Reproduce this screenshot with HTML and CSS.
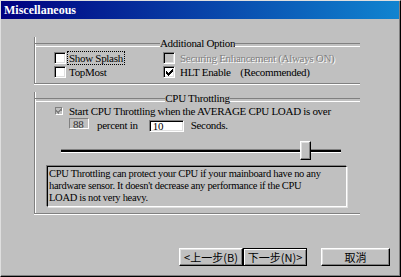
FILE: index.html
```html
<!DOCTYPE html>
<html>
<head>
<meta charset="utf-8">
<link rel="stylesheet" href="styles.css">
</head>
<body>
<div class="window">
  <div class="titlebar"><span class="title">Miscellaneous</span></div>
  <div class="content">
    <section class="group group-opt">
      <div class="group-head"><span class="legend">Additional Option</span></div>
      <div class="opt-grid">
        <div class="check"><span class="box"></span><span class="label focus">Show Splash</span></div>
        <div class="check disabled col2"><span class="box"></span><span class="label">Securing Enhancement (Always ON)</span></div>
        <div class="check"><span class="box"></span><span class="label">TopMost</span></div>
        <div class="check col2"><span class="box"><svg class="tick" width="7" height="7" viewBox="0 0 7 7"><path d="M6 0h1v1h-1zM5 1h2v1h-2zM0 2h1v1h-1zM4 2h3v1h-3zM0 3h2v1h-2zM3 3h3v1h-3zM0 4h5v1h-5zM1 5h3v1h-3zM2 6h1v1h-1z"/></svg></span><span class="label pre">HLT Enable    (Recommended)</span></div>
      </div>
    </section>

    <section class="group group-cpu">
      <div class="group-head"><span class="legend">CPU Throttling</span></div>
      <div class="cpu-row1">
        <span class="minibox"><svg class="tick grey" width="6" height="6" viewBox="0 0 7 7"><path d="M6 0h1v1h-1zM5 1h2v1h-2zM0 2h1v1h-1zM4 2h3v1h-3zM0 3h2v1h-2zM3 3h3v1h-3zM0 4h5v1h-5zM1 5h3v1h-3zM2 6h1v1h-1z"/></svg></span>
        <span class="label">Start CPU Throttling when the AVERAGE CPU LOAD is over</span>
      </div>
      <div class="cpu-row2">
        <span class="readout">88</span>
        <span class="label">percent in</span>
        <span class="edit">10</span>
        <span class="label">Seconds.</span>
      </div>
      <div class="slider">
        <span class="track" style="width:239px"></span>
        <span class="thumb"></span>
        <span class="track rest"></span>
      </div>
      <div class="info">CPU Throttling can protect your CPU if your mainboard have no any<br>hardware sensor. It doesn't decrease any performance if the CPU<br>LOAD is not very heavy.</div>
    </section>
  </div>
  <div class="buttons">
    <button class="btn">&lt;上一步(<u>B</u>)</button>
    <button class="btn default">下一步(<u>N</u>)&gt;</button>
    <button class="btn cancel">取消</button>
  </div>
</div>
</body>
</html>
```

FILE: styles.css
```css
* { box-sizing: border-box; }
html, body { margin: 0; padding: 0; background: #c0c0c0; }

.window {
  width: 401px;
  height: 277px;
  background: #c0c0c0;
  border-top: 1px solid #dfdfdf;
  border-left: 1px solid #dfdfdf;
  border-right: 1px solid #000;
  border-bottom: 1px solid #000;
  box-shadow: inset -1px -1px 0 #808080;
  display: flex;
  flex-direction: column;
  font-family: "Liberation Serif", "Times New Roman", serif;
  font-size: 11px;
  letter-spacing: -0.3px;
  color: #000;
}

.titlebar {
  height: 18px;
  margin-right: 1px;
  padding-left: 3px;
  background: linear-gradient(to right, #000080, #1084d0);
  display: flex;
  align-items: center;
}
.title {
  color: #fff;
  font-weight: bold;
  font-size: 12px;
  letter-spacing: 0;
  line-height: 18px;
}

.content {
  padding-left: 33px;
}

.group {
  width: 326px;
  border-left: 1px solid #808080;
  border-bottom: 1px solid #808080;
  box-shadow: inset 1px 0 0 #fff, 0 1px 0 #fff;
}
.group-opt { margin-top: 24px; }
.group-cpu { margin-top: 14px; }

.group-head {
  margin-top: -6px;
  height: 12px;
  display: flex;
  align-items: flex-start;
}
.group-head::before,
.group-head::after {
  content: "";
  flex: 1;
  margin-top: 6px;
  height: 2px;
  border-top: 1px solid #808080;
  border-bottom: 1px solid #fff;
}
.legend {
  line-height: 12px;
  white-space: nowrap;
}

.opt-grid {
  display: grid;
  grid-template-columns: 109px auto;
  grid-auto-rows: 14px;
  padding: 2px 0 4px 19px;
}
.check {
  display: flex;
  align-items: center;
  line-height: 14px;
  white-space: nowrap;
}
.box {
  width: 12px;
  height: 12px;
  flex: none;
  background: #fff;
  border-top: 1px solid #808080;
  border-left: 1px solid #808080;
  border-right: 1px solid #fff;
  border-bottom: 1px solid #fff;
  box-shadow: inset 1px 1px 0 #000, inset -1px -1px 0 #dfdfdf;
  display: flex;
  align-items: center;
  justify-content: center;
  margin-right: 3px;
}
.col2 .box { margin-right: 5px; }
.tick { display: block; fill: #000; shape-rendering: crispEdges; margin: 1px 0 0 1px; }
.label { line-height: 14px; }
.focus { outline: 1px dotted #000; outline-offset: 0; padding: 0 1px; line-height: 12px; margin-left: -1px; }
.pre { white-space: pre; }

.disabled .box { background: #c0c0c0; }
.disabled .label { color: #808080; text-shadow: 1px 1px 0 #fff; }

.cpu-row1 {
  height: 14px;
  display: flex;
  align-items: center;
  padding-left: 19px;
  white-space: nowrap;
}
.minibox {
  width: 8px;
  height: 8px;
  margin-left: 1px;
  margin-right: 6px;
  background: #c0c0c0;
  border-top: 1px solid #808080;
  border-left: 1px solid #808080;
  border-right: 1px solid #fff;
  border-bottom: 1px solid #fff;
  display: flex;
  align-items: center;
  justify-content: center;
}
.tick.grey { fill: #808080; margin: 0; }

.cpu-row2 {
  height: 14px;
  display: flex;
  align-items: flex-start;
  padding-left: 34px;
  white-space: nowrap;
}
.readout {
  width: 20px;
  height: 11px;
  line-height: 10px;
  border-top: 1px solid #808080;
  border-left: 1px solid #808080;
  border-right: 1px solid #fff;
  border-bottom: 1px solid #fff;
  padding-left: 3px;
  color: #303030;
  margin-right: 8px;
}
.cpu-row2 .label { line-height: 12px; margin-top: 1px; }
.edit {
  width: 35px;
  height: 12px;
  margin: 2px 7px 0 11px;
  background: #fff;
  border-top: 1px solid #808080;
  border-left: 1px solid #808080;
  border-right: 1px solid #fff;
  border-bottom: 1px solid #fff;
  box-shadow: inset 1px 1px 0 #000, inset -1px -1px 0 #dfdfdf;
  padding-left: 3px;
  line-height: 11px;
}

.slider {
  margin: 9px 0 0 26px;
  width: 280px;
  height: 19px;
  display: flex;
  align-items: center;
}
.track {
  height: 4px;
  border-top: 1px solid #808080;
  border-bottom: 1px solid #fff;
  background: #000;
}
.track.rest { flex: 1; }
.thumb {
  width: 11px;
  height: 19px;
  flex: none;
  background: #c0c0c0;
  border-top: 1px solid #fff;
  border-left: 1px solid #fff;
  border-right: 1px solid #000;
  border-bottom: 1px solid #000;
  box-shadow: inset -1px -1px 0 #808080, inset 1px 1px 0 #dfdfdf;
}

.info {
  margin: 6px 0 6px 12px;
  width: 300px;
  height: 41px;
  border-top: 1px solid #000;
  border-left: 1px solid #000;
  border-right: 1px solid #fff;
  border-bottom: 1px solid #fff;
  box-shadow: -1px -1px 0 #808080, 1px 1px 0 #dfdfdf;
  padding: 1px 0 0 1px;
  font-size: 10.5px;
  line-height: 12px;
  white-space: nowrap;
}

.buttons {
  margin-top: 34px;
  display: flex;
  justify-content: flex-end;
  padding-right: 10px;
}
.btn {
  height: 18px;
  padding: 0;
  margin: 0;
  background: #c0c0c0;
  font-family: "Noto Sans CJK TC", "Noto Sans CJK SC", sans-serif;
  font-size: 11px;
  letter-spacing: 0;
  line-height: 14px;
  white-space: nowrap;
  color: #000;
  border-top: 1px solid #fff;
  border-left: 1px solid #fff;
  border-right: 1px solid #000;
  border-bottom: 1px solid #000;
  box-shadow: inset -1px -1px 0 #808080, inset 1px 1px 0 #dfdfdf;
}
.btn u { text-decoration: none; }
.btn:first-child { width: 64px; }
.btn.default {
  width: 64px;
  border: 1px solid #000;
  box-shadow: inset 1px 1px 0 #fff, inset -1px -1px 0 #808080;
}
.btn.cancel { width: 69px; margin-left: 14px; }
```
